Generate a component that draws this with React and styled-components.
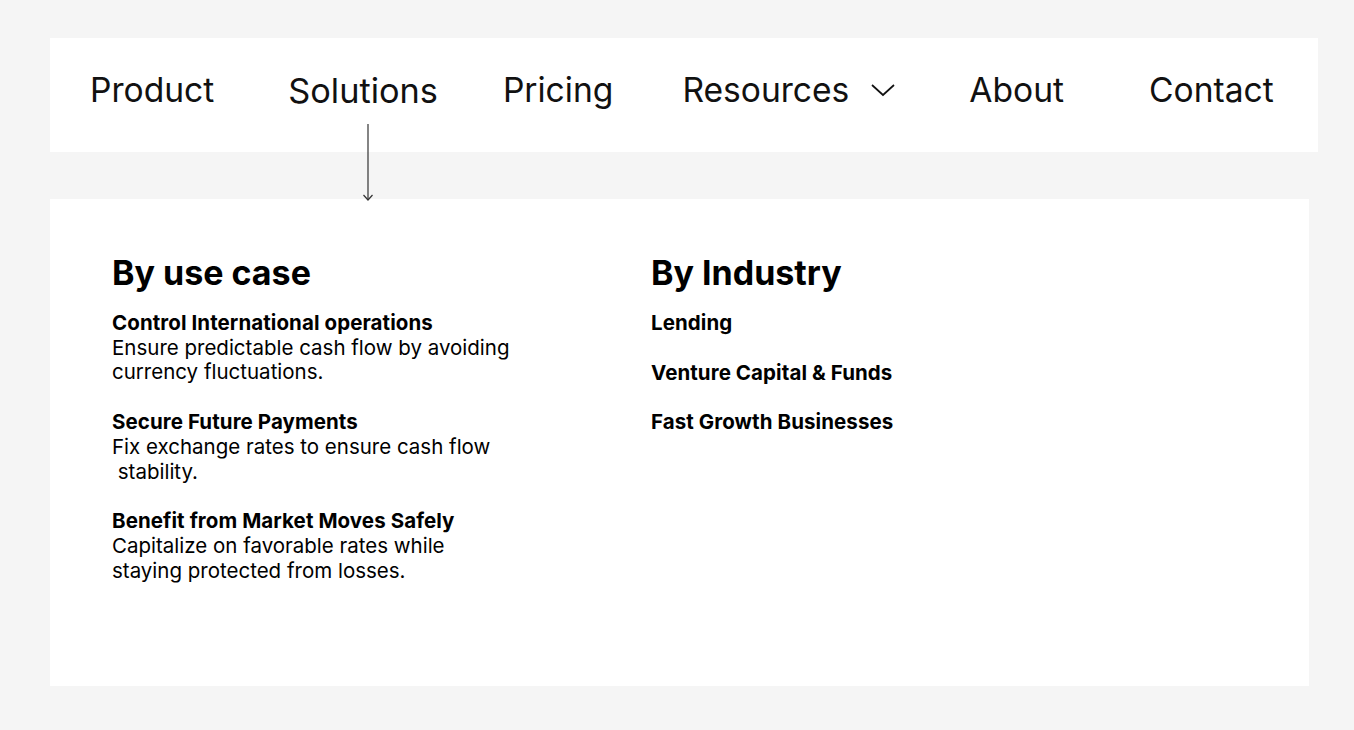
import React from 'react';
import styled, { createGlobalStyle } from 'styled-components';

const GlobalStyle = createGlobalStyle`
	html, body {
		margin: 0;
		padding: 0;
		background: #f5f5f5;
	}
	body {
		font-family: 'Inter', 'Noto Sans', sans-serif;
		color: #111;
	}
`;

const Page = styled.div`
	padding: 38px 0 0 50px;
	min-height: 730px;
	box-sizing: border-box;
`;

const NavBar = styled.nav`
	box-sizing: border-box;
	width: 1268px;
	height: 114px;
	background: #fff;
	display: flex;
	align-items: flex-start;
	padding: 32px 0 0 40px;
`;

const NavItem = styled.div`
	position: relative;
	display: flex;
	align-items: center;
	gap: 21px;
	margin-left: ${(p) => p.$offset}px;
	font-size: ${(p) => (p.$active ? '34.3px' : '33.6px')};
	line-height: 40px;
	font-weight: 400;
	color: #111;
	top: ${(p) => (p.$active ? '1px' : '0')};
`;

const Pointer = styled.svg`
	position: absolute;
	left: 74px;
	top: 53px;
`;

const Panel = styled.section`
	box-sizing: border-box;
	width: 1259px;
	height: 487px;
	margin-top: 47px;
	background: #fff;
	padding: 54px 0 0 62px;
	display: grid;
	grid-template-columns: 539px 1fr;
	align-items: start;
`;

const Column = styled.div`
	display: flex;
	flex-direction: column;
`;

const Heading = styled.h2`
	margin: 0 0 18px;
	font-size: 34px;
	line-height: 40px;
	font-weight: 700;
	color: #000;
`;

const List = styled.div`
	display: flex;
	flex-direction: column;
	gap: 25px;
`;

const Entry = styled.div`
	max-width: 400px;
	font-size: 20.5px;
	line-height: 24.7px;
	color: #000;
`;

const EntryTitle = styled.div`
	font-weight: 700;
	letter-spacing: 0.08px;
`;

const EntryText = styled.div`
	font-weight: 400;
`;

const Chevron = () => (
	<svg width="26" height="16" viewBox="0 0 26 16" fill="none">
		<polyline points="2,3 13,13 24,3" stroke="#111" strokeWidth="1.7" />
	</svg>
);

const navItems = [
	{ label: 'Product', offset: 0 },
	{ label: 'Solutions', offset: 74 },
	{ label: 'Pricing', offset: 65 },
	{ label: 'Resources', offset: 69 },
	{ label: 'About', offset: 73 },
	{ label: 'Contact', offset: 85 },
];

const useCases = [
	{
		title: 'Control International operations',
		text: 'Ensure predictable cash flow by avoiding currency fluctuations.',
	},
	{
		title: 'Secure Future Payments',
		text: 'Fix exchange rates to ensure cash flow \u00a0stability.',
	},
	{
		title: 'Benefit from Market Moves Safely',
		text: 'Capitalize on favorable rates while staying protected from losses.',
	},
];

const industries = ['Lending', 'Venture Capital & Funds', 'Fast Growth Businesses'];

export default function App() {
	return (
		<Page>
			<GlobalStyle />
			<NavBar>
				{navItems.map(({ label, offset }) => (
					<NavItem key={label} $offset={offset} $active={label === 'Solutions'}>
						{label}
						{label === 'Resources' && <Chevron />}
						{label === 'Solutions' && (
							<Pointer width="12" height="78" viewBox="0 0 12 78">
								<line x1="6" y1="0" x2="6" y2="76" stroke="#333" strokeWidth="1.2" />
								<polyline points="1.5,71 6,76 10.5,71" fill="none" stroke="#333" strokeWidth="1.2" />
							</Pointer>
						)}
					</NavItem>
				))}
			</NavBar>
			<Panel>
				<Column>
					<Heading>By use case</Heading>
					<List>
						{useCases.map((u) => (
							<Entry key={u.title}>
								<EntryTitle>{u.title}</EntryTitle>
								<EntryText>{u.text}</EntryText>
							</Entry>
						))}
					</List>
				</Column>
				<Column>
					<Heading>By Industry</Heading>
					<List>
						{industries.map((name) => (
							<Entry key={name}>
								<EntryTitle>{name}</EntryTitle>
							</Entry>
						))}
					</List>
				</Column>
			</Panel>
		</Page>
	);
}
